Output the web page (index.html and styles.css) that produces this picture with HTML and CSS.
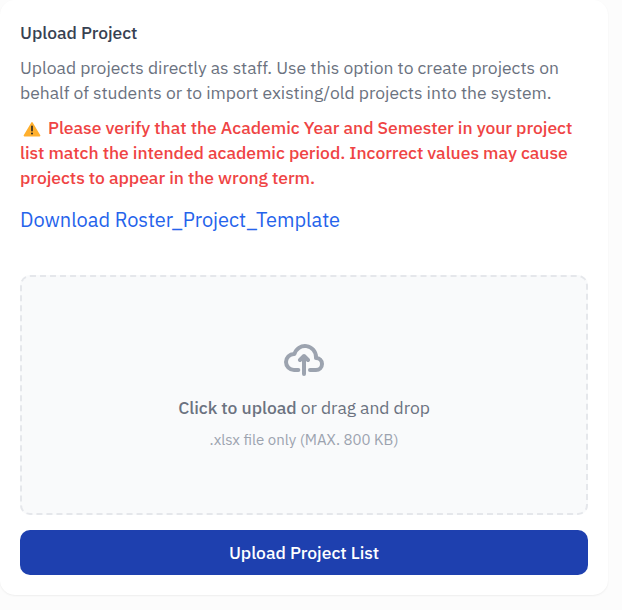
FILE: index.html
```html
<!DOCTYPE html>
<html lang="en">
<head>
<meta charset="utf-8">
<title>Upload Project</title>
<link rel="stylesheet" href="styles.css">
</head>
<body>
<main class="card">
  <h1 class="title">Upload Project</h1>
  <p class="description">
    <span class="line">Upload projects directly as staff. Use this option to create projects on</span>
    <span class="line">behalf of students or to import existing/old projects into the system.</span>
  </p>
  <p class="warning">
    <span class="line"><svg class="warn-icon" viewBox="0 0 18 16" aria-hidden="true"><path d="M9 1.9 16.6 14.6H1.4Z" fill="#ffb02e" stroke="#ffb02e" stroke-width="1.6" stroke-linejoin="round"/><path d="M9 5.4v4.3" stroke="#242424" stroke-width="1.6" stroke-linecap="round"/><circle cx="9" cy="12.4" r="1" fill="#242424"/></svg>Please verify that the Academic Year and Semester in your project</span>
    <span class="line">list match the intended academic period. Incorrect values may cause</span>
    <span class="line">projects to appear in the wrong term.</span>
  </p>
  <a class="download" href="#">Download Roster_Project_Template</a>
  <label class="dropzone">
    <svg class="upload-icon" viewBox="0 0 20 16" fill="none" aria-hidden="true"><path stroke="currentColor" stroke-linecap="round" stroke-linejoin="round" stroke-width="2" d="M13 13h3a3 3 0 0 0 0-6h-.025A5.56 5.56 0 0 0 16 6.5 5.5 5.5 0 0 0 5.207 5.021C5.137 5.017 5.071 5 5 5a4 4 0 0 0 0 8h2.167M10 15V6m0 0L8 8m2-2 2 2"/></svg>
    <span class="drop-text"><b>Click to upload</b> or drag and drop</span>
    <span class="drop-hint">.xlsx file only (MAX. 800 KB)</span>
  </label>
  <button class="submit" type="button">Upload Project List</button>
</main>
</body>
</html>
```

FILE: styles.css
```css
* { box-sizing: border-box; }
body {
  margin: 0;
  height: 610px;
  overflow: hidden;
  background: #fcfcfc;
  font-family: "IBM Plex Sans", Roboto, sans-serif;
  font-size: 17.5px;
  line-height: 25px;
}
.card {
  display: flex;
  flex-direction: column;
  width: 608px;
  height: 595px;
  padding: 20px;
  border-radius: 15px;
  background: #fff;
  box-shadow: 0 1px 2px rgba(0, 0, 0, .06);
}
.title {
  margin: 0 0 10px;
  font-size: 17.5px;
  font-weight: 500;
  letter-spacing: -.05px;
  color: #374151;
}
.description, .warning { margin: 0 0 10px; }
.description { color: #6b7280; letter-spacing: -.008px; }
.warning {
  margin-bottom: 15px;
  color: #ef4444;
  font-weight: 500;
  letter-spacing: -.045px;
}
.line { display: block; white-space: nowrap; }
.warn-icon {
  width: 18px;
  height: 16px;
  margin: 0 7.5px 0 2.5px;
  vertical-align: -3px;
}
.download {
  align-self: flex-start;
  font-size: 20px;
  line-height: 30px;
  letter-spacing: -.02px;
  color: #2563eb;
  text-decoration: none;
}
.dropzone {
  display: flex;
  flex-direction: column;
  align-items: center;
  height: 240px;
  margin-top: auto;
  padding-top: 63px;
  border: 2px dashed #e5e7eb;
  border-radius: 10px;
  background: #f9fafb;
  color: #6b7280;
}
.upload-icon { width: 40px; height: 40px; margin-bottom: 15px; color: #9ca3af; }
.drop-text { margin-bottom: 10px; letter-spacing: -.03px; }
.drop-text b { font-weight: 500; }
.drop-hint { font-size: 15px; line-height: 20px; color: #9ca3af; }
.submit {
  height: 45px;
  margin-top: 15px;
  padding: 0;
  border: 0;
  border-radius: 10px;
  background: #1e40af;
  color: #fff;
  font: 500 17.5px/25px "IBM Plex Sans", Roboto, sans-serif;
  letter-spacing: -.03px;
}
```
